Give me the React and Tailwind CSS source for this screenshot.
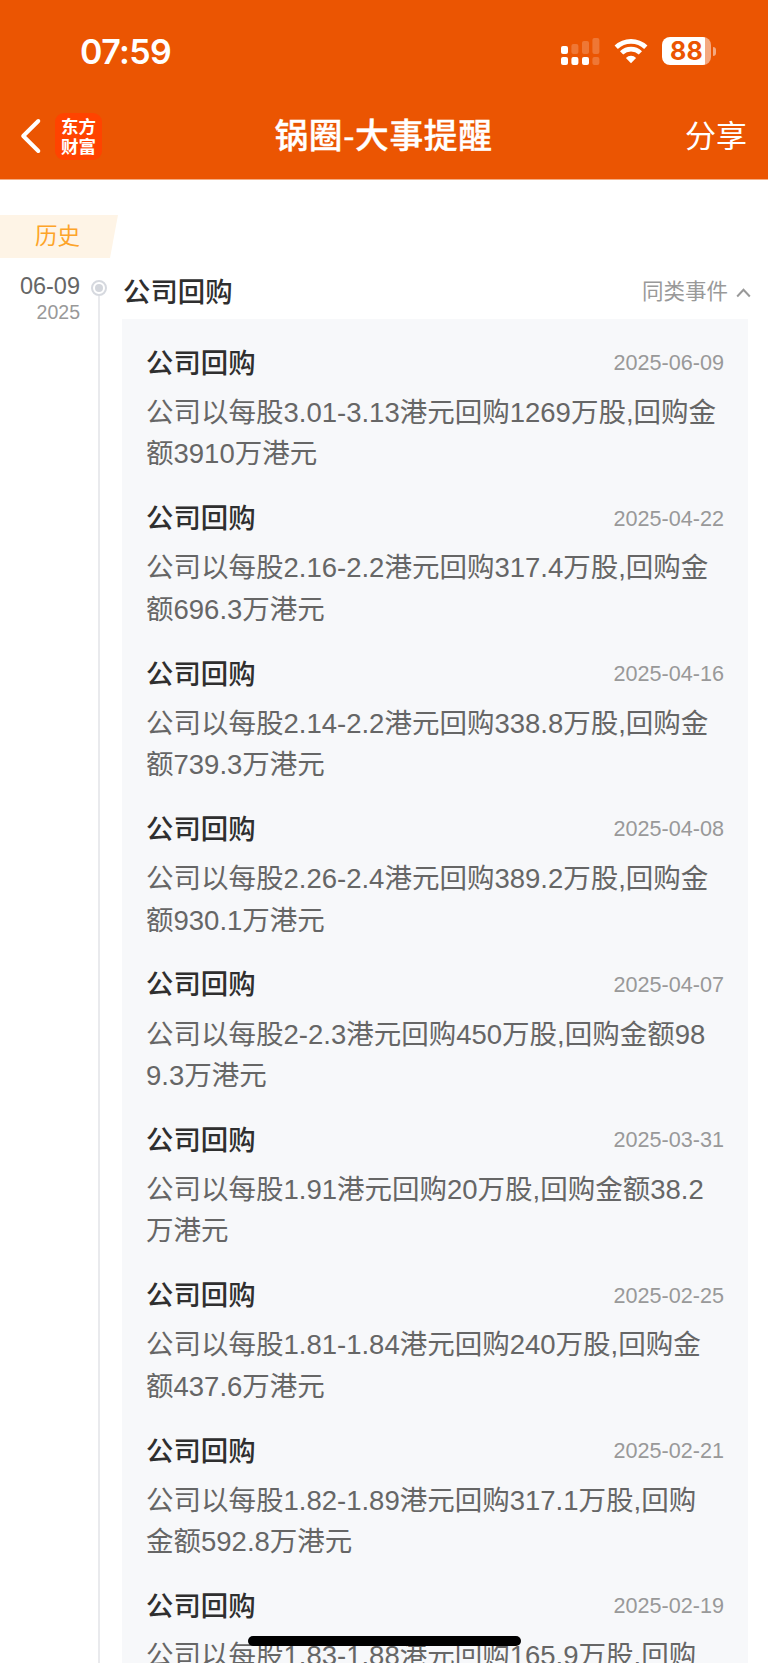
const EVENTS = [
  ['2025-06-09', '公司以每股3.01-3.13港元回购1269万股,回购金', '额3910万港元'],
  ['2025-04-22', '公司以每股2.16-2.2港元回购317.4万股,回购金', '额696.3万港元'],
  ['2025-04-16', '公司以每股2.14-2.2港元回购338.8万股,回购金', '额739.3万港元'],
  ['2025-04-08', '公司以每股2.26-2.4港元回购389.2万股,回购金', '额930.1万港元'],
  ['2025-04-07', '公司以每股2-2.3港元回购450万股,回购金额98', '9.3万港元'],
  ['2025-03-31', '公司以每股1.91港元回购20万股,回购金额38.2', '万港元'],
  ['2025-02-25', '公司以每股1.81-1.84港元回购240万股,回购金', '额437.6万港元'],
  ['2025-02-21', '公司以每股1.82-1.89港元回购317.1万股,回购', '金额592.8万港元'],
  ['2025-02-19', '公司以每股1.83-1.88港元回购165.9万股,回购', ''],
];

function Signal() {
  return (
    <svg className="h-[28px] w-[39px]" viewBox="0 0 39 28" fill="#fff">
      <rect x="0" y="9" width="7" height="8" rx="2" />
      <rect x="0" y="20" width="7" height="8" rx="2" />
      <rect x="10.4" y="20" width="7" height="8" rx="2" />
      <rect x="21" y="20" width="7" height="8" rx="2" />
      <g opacity=".2">
        <rect x="10.4" y="7" width="7" height="10" rx="2" />
        <rect x="21" y="4" width="7" height="13" rx="2" />
        <rect x="31.4" y="1" width="7" height="16" rx="2" />
        <rect x="31.4" y="20" width="7" height="8" rx="2" />
      </g>
    </svg>
  );
}

function Wifi() {
  return (
    <svg className="h-[26px] w-[34px]" viewBox="0 0 34 26">
      <g fill="none" stroke="#fff" strokeWidth="4.7">
        <path d="M2.2 9.3a21.4 21.4 0 0 1 29.6 0" />
        <path d="M7.6 14.9a13.7 13.7 0 0 1 18.8 0" />
      </g>
      <path d="M17 25.2l-5.1-5.3a7.4 7.4 0 0 1 10.2 0z" fill="#fff" />
    </svg>
  );
}

function StatusBar() {
  return (
    <div className="flex h-[102px] items-center pl-[80px] pr-[52px]">
      <div className="w-[100px] whitespace-nowrap pt-[2px] font-['Inter',sans-serif] text-[34px] font-semibold leading-none tracking-[-0.6px]">07:59</div>
      <div className="ml-auto flex items-center">
        <Signal />
        <div className="ml-[14px] flex"><Wifi /></div>
        <div className="ml-[14px] flex items-center">
          <div className="flex h-[28px] w-[49px] items-center justify-center rounded-[8px] bg-[linear-gradient(90deg,#fff_43px,#f4a880_43px)] pt-[1px] font-['Inter',sans-serif] text-[25px] font-bold leading-none tracking-[0.2px] text-[#eb5502]">88</div>
          <div className="ml-[2px] h-[9px] w-[3px] rounded-r-full bg-[#f4a880]" />
        </div>
      </div>
    </div>
  );
}

function NavBar() {
  return (
    <div className="flex h-[78px] items-center justify-between border-b border-[#f4ad84] pb-[9px] pl-[20px] pr-[21px]">
      <div className="flex w-[120px] items-center">
        <svg className="h-[36px] w-[22px]" viewBox="0 0 22 36" fill="none" stroke="#fff" strokeWidth="4" strokeLinecap="round" strokeLinejoin="round">
          <path d="M18.3 3L3.2 18l15.1 15" />
        </svg>
        <div className="ml-[13px] flex h-[47px] w-[47px] flex-col items-center justify-center rounded-[9px] bg-[#ff4300] font-['Noto_Sans_CJK_SC',sans-serif] text-[17.5px] font-bold leading-[20px]">
          <span>东方</span>
          <span>财富</span>
        </div>
      </div>
      <div className="whitespace-nowrap pt-[2px] text-[33.7px] font-medium leading-none tracking-[0.7px] [-webkit-text-stroke:0.4px_#fff]">锅圈-大事提醒</div>
      <div className="w-[120px] pt-[1px] text-right text-[31px] leading-none">分享</div>
    </div>
  );
}

function EventItem({ date, first, second }) {
  return (
    <div className="h-[155.4px]">
      <div className="flex h-[42px] items-center justify-between">
        <span className="pt-[1px] text-[27.4px] font-medium leading-none text-[#2f2f2f]">公司回购</span>
        <span className="text-[21.6px] leading-none text-[#999]">{date}</span>
      </div>
      <p className="mt-[8px] whitespace-nowrap text-[27.5px] leading-[41.4px] text-[#666]">
        {first}<br />{second}
      </p>
    </div>
  );
}

export default function App() {
  return (
    <div className="relative flex h-[1663px] w-[768px] flex-col overflow-hidden bg-white font-['Liberation_Sans','Noto_Sans_CJK_SC',sans-serif]">
      <header className="h-[180px] shrink-0 bg-[#eb5502] text-white">
        <StatusBar />
        <NavBar />
      </header>
      <div className="mt-[35px] flex h-[43px] w-[118px] shrink-0 items-center bg-[#fef4e6] pl-[35px] pt-[2px] text-[22.5px] leading-none text-[#fda429] [clip-path:polygon(0_0,100%_0,110px_100%,0_100%)]">
        历史
      </div>
      <div className="flex min-h-0 flex-1">
        <div className="w-[80px] pt-[15px] text-right">
          <div className="text-[23.5px] leading-[26px] text-[#666]">06-09</div>
          <div className="text-[19.5px] leading-[26px] text-[#999]">2025</div>
        </div>
        <div className="ml-[10px] flex w-[17px] flex-col items-center pt-[22px]">
          <div className="flex size-[16px] shrink-0 items-center justify-center rounded-full border-2 border-[#d6d9df]">
            <div className="size-[8px] rounded-full bg-[#d3d6dc]" />
          </div>
          <div className="w-[2px] flex-1 bg-[#e9eaed]" />
        </div>
        <div className="ml-[15px] w-[626px]">
          <div className="flex h-[61px] items-center justify-between pt-[9px]">
            <span className="ml-[1px] text-[27.4px] font-medium leading-none text-[#2f2f2f]">公司回购</span>
            <span className="flex items-center text-[21.5px] leading-none text-[#999]">
              同类事件
              <svg className="ml-[8px] mr-[-3px] h-[10px] w-[15px]" viewBox="0 0 15 10" fill="none" stroke="#999" strokeWidth="2">
                <path d="M1.2 8.5L7.5 1.7l6.3 6.8" />
              </svg>
            </span>
          </div>
          <div className="bg-[#f7f8fa] pl-[24px] pr-[24px] pt-[23px]">
            {EVENTS.map(([date, first, second]) => (
              <EventItem key={date} date={date} first={first} second={second} />
            ))}
          </div>
        </div>
      </div>
      <div className="absolute left-[248px] top-[1636px] h-[10px] w-[273px] rounded-full bg-black" />
    </div>
  );
}
